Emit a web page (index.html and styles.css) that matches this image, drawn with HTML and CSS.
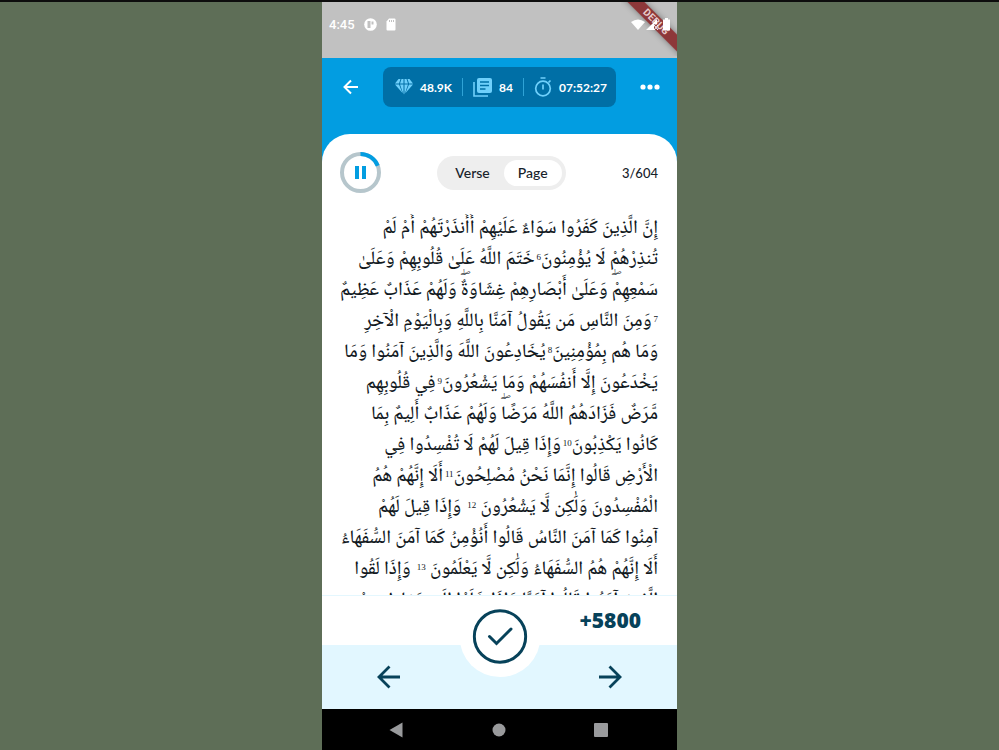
FILE: index.html
```html
<!DOCTYPE html>
<html lang="en">
<head>
<meta charset="utf-8">
<meta name="viewport" content="width=device-width, initial-scale=1">
<title>Quran reader</title>
<link rel="stylesheet" href="styles.css">
</head>
<body>
<div class="phone">
  <div class="status">
    <span class="clock">4:45</span>
    <svg class="status-icon" viewBox="0 0 13 13"><circle cx="6.500" cy="6.500" r="6.300" fill="#fff"/><path d="M3.500 3h3v7h-3zM7.500 3.500h2v3h-2z" fill="#c1c1c1"/></svg>
    <svg class="status-icon" viewBox="0 0 13 13"><path d="M5 .5h5.500q1 0 1 1v10q0 1-1 1h-7q-1 0-1-1V3.500z" fill="#fff"/><path d="M5.500 2v2M7.500 2v2M9.500 2v2" stroke="#c1c1c1"/></svg>
    <svg class="signals" viewBox="0 0 40 14"><path d="M0 4Q7-1 14 4L7 12zM15 12L26 1v5h-3v6zM34 1.500V0h3v1.500h2v11h-7v-11z" fill="#fff"/><path d="M23 7l4 5M27 7l-4 5" stroke="#fff"/></svg>
  </div>
  <div class="debug"><span>DEBUG</span></div>

  <header class="topbar">
    <button class="icon-btn" aria-label="Back"><svg width="16" height="16" viewBox="0 0 16 16" fill="none" stroke="#fff" stroke-width="2"><path d="M15 8H2M8 1.500L1.500 8L8 14.500"/></svg></button>
    <div class="stats">
      <span class="stat">
        <svg width="18" height="16" viewBox="0 0 18 16" fill="#6fd0fb"><path d="M3.500 0H5.500L4 4.500H0zM6.500 0h2v4.500H5zM9.500 0h2L13 4.500H9.500zM12.500 0h2L18 4.500h-4zM0 5.500h4L7.500 14zM5 5.500h3.500V15.500zM9.500 5.500H13L9.500 15.500zM14 5.500h4L10.500 14z"/></svg>
        48.9K</span>
      <span class="stat">
        <svg width="19" height="19" viewBox="0 0 19 19"><rect x="4" y="0" width="15" height="15" rx="2" fill="#6fd0fb"/><path d="M7 4h9M7 7.500h9M7 11h5.500" stroke="#006fa6" stroke-width="1.500"/><path d="M1 4v14h14" fill="none" stroke="#6fd0fb" stroke-width="1.600"/></svg>
        84</span>
      <span class="stat">
        <svg width="18" height="20" viewBox="0 0 18 20" fill="none" stroke="#6fd0fb" stroke-width="1.700"><circle cx="9" cy="11.500" r="7.300"/><path d="M6.500 1h5M9 7.500v5M14.500 5.500l2-2"/></svg>
        07:52:27</span>
    </div>
    <button class="icon-btn" aria-label="More"><svg width="20" height="6" viewBox="0 0 20 6" fill="#fff"><circle cx="3" cy="3" r="2.600"/><circle cx="10" cy="3" r="2.600"/><circle cx="17" cy="3" r="2.600"/></svg></button>
  </header>

  <main class="sheet">
    <div class="controls">
      <button class="icon-btn" aria-label="Pause"><svg width="41" height="41" viewBox="0 0 41 41" fill="none" stroke-width="4"><circle cx="20.500" cy="20.500" r="18.500" stroke="#b6c6cc"/><path d="M20.500 2A18.500 18.500 0 0 1 37.700 13.700" stroke="#029de1"/><path d="M17 14v13M24 14v13" stroke="#029de1"/></svg></button>
      <div class="toggle">
        <button class="tab">Verse</button>
        <button class="tab active">Page</button>
      </div>
      <span class="count">3/604</span>
    </div>
    <div class="page" lang="ar" dir="rtl">
      <p>إِنَّ الَّذِينَ كَفَرُوا سَوَاءٌ عَلَيْهِمْ أَأَنذَرْتَهُمْ أَمْ لَمْ</p>
      <p>تُنذِرْهُمْ لَا يُؤْمِنُونَ<sup>6</sup>خَتَمَ اللَّهُ عَلَىٰ قُلُوبِهِمْ وَعَلَىٰ</p>
      <p>سَمْعِهِمْۖ وَعَلَىٰ أَبْصَارِهِمْ غِشَاوَةٌۖ وَلَهُمْ عَذَابٌ عَظِيمٌ</p>
      <p><sup>7</sup>وَمِنَ النَّاسِ مَن يَقُولُ آمَنَّا بِاللَّهِ وَبِالْيَوْمِ الْآخِرِ</p>
      <p>وَمَا هُم بِمُؤْمِنِينَ<sup>8</sup>يُخَادِعُونَ اللَّهَ وَالَّذِينَ آمَنُوا وَمَا</p>
      <p>يَخْدَعُونَ إِلَّا أَنفُسَهُمْ وَمَا يَشْعُرُونَ<sup>9</sup>فِي قُلُوبِهِم</p>
      <p>مَّرَضٌ فَزَادَهُمُ اللَّهُ مَرَضًاۖ وَلَهُمْ عَذَابٌ أَلِيمٌ بِمَا</p>
      <p>كَانُوا يَكْذِبُونَ<sup>10</sup>وَإِذَا قِيلَ لَهُمْ لَا تُفْسِدُوا فِي</p>
      <p>الْأَرْضِ قَالُوا إِنَّمَا نَحْنُ مُصْلِحُونَ<sup>11</sup>أَلَا إِنَّهُمْ هُمُ</p>
      <p>الْمُفْسِدُونَ وَلَٰكِن لَّا يَشْعُرُونَ <sup>12</sup> وَإِذَا قِيلَ لَهُمْ</p>
      <p>آمِنُوا كَمَا آمَنَ النَّاسُ قَالُوا أَنُؤْمِنُ كَمَا آمَنَ السُّفَهَاءُ</p>
      <p>أَلَا إِنَّهُمْ هُمُ السُّفَهَاءُ وَلَٰكِن لَّا يَعْلَمُونَ <sup>13</sup> وَإِذَا لَقُوا</p>
      <p>الَّذِينَ آمَنُوا قَالُوا آمَنَّا وَإِذَا خَلَوْا إِلَىٰ شَيَاطِينِهِمْ</p>
    </div>
  </main>

  <footer class="bottom">
    <div class="score">+5800</div>
    <div class="pager">
      <button class="icon-btn" aria-label="Previous page"><svg width="24" height="24" viewBox="0 0 24 24" fill="none" stroke="#07425a" stroke-width="2.800"><path d="M23 12H2M12.500 1.500L2 12L12.500 22.500"/></svg></button>
      <button class="icon-btn" aria-label="Next page"><svg width="24" height="24" viewBox="0 0 24 24" fill="none" stroke="#07425a" stroke-width="2.800"><path d="M1 12H22M11.500 1.500L22 12L11.500 22.500"/></svg></button>
    </div>
    <button class="done" aria-label="Mark page as read"><svg width="55" height="55" viewBox="0 0 55 55" fill="none" stroke="#07425a" stroke-width="3"><circle cx="27.500" cy="27.500" r="25.700"/><path d="M17 27.500l7 7L38.500 20" stroke-linecap="round"/></svg></button>
  </footer>

  <nav class="system">
    <button class="icon-btn" aria-label="System back"><svg width="14" height="16" viewBox="0 0 14 16"><path d="M13.500 .5v15L.5 8z" fill="#999a9c"/></svg></button>
    <button class="icon-btn" aria-label="Home"><svg width="14" height="14" viewBox="0 0 14 14"><circle cx="7" cy="7" r="6.500" fill="#999a9c"/></svg></button>
    <button class="icon-btn" aria-label="Recent apps"><svg width="14" height="14" viewBox="0 0 14 14"><rect width="14" height="14" rx="1" fill="#999a9c"/></svg></button>
  </nav>
</div>
</body>
</html>
```

FILE: styles.css
```css
* { box-sizing: border-box; }

body {
  margin: 0;
  background: #5e6e57;
  border-top: 2px solid #0d0d0d;
  font-family: Lato, "Open Sans", sans-serif;
  color: #17222a;
}

button {
  margin: 0;
  padding: 0;
  border: 0;
  background: none;
  font: inherit;
  color: inherit;
}

svg { display: block; flex: none; }

.icon-btn {
  display: flex;
  align-items: center;
  justify-content: center;
}

.phone {
  position: relative;
  display: flex;
  flex-direction: column;
  width: 100%;
  max-width: 355px;
  height: calc(100vh - 2px);
  margin: 0 auto;
  overflow: hidden;
  background: #029de1;
}

.status {
  display: flex;
  align-items: flex-start;
  gap: 7px;
  padding: 16px 6px 27px 7px;
  background: #c1c1c1;
  color: #fff;
}

.clock {
  margin-right: 2px;
  font: 500 13px/13px Roboto, sans-serif;
}

.status-icon { width: 13px; height: 13px; }

.signals {
  position: relative;
  z-index: 1;
  width: 40px;
  height: 14px;
  margin: 0 0 -1px auto;
}

.debug {
  position: absolute;
  top: 0;
  right: 0;
  width: 56px;
  height: 54px;
  overflow: hidden;
}

.debug span {
  position: absolute;
  top: 14px;
  left: -11px;
  width: 92px;
  background: rgba(128, 20, 22, 0.8);
  box-shadow: 0 0 6px rgba(0, 0, 0, 0.4);
  color: #e8cccc;
  font: 700 10px/12px Roboto, sans-serif;
  text-align: center;
  transform: rotate(45deg);
}

.topbar {
  display: flex;
  align-items: flex-start;
  justify-content: space-between;
  padding: 9px 17px 27px 21px;
}

.topbar .icon-btn { height: 40px; }

.stats {
  display: flex;
  align-items: center;
  height: 40px;
  padding: 0 9px 0 12px;
  border-radius: 8px;
  background: #006fa6;
  color: #fff;
  font-size: 12px;
  font-weight: 700;
}

.stat {
  display: flex;
  align-items: center;
  gap: 7px;
}

.stat + .stat {
  height: 18px;
  margin-left: 10px;
  padding-left: 10px;
  border-left: 1px solid #2fa3d6;
}

.sheet {
  flex: 1;
  min-height: 0;
  display: flex;
  flex-direction: column;
  border-radius: 28px 28px 0 0;
  background: #fff;
}

.controls {
  display: flex;
  align-items: center;
  justify-content: space-between;
  padding: 18px 19px 0 18px;
  font-size: 14px;
  font-weight: 500;
}

.count { font-size: 13px; }

.toggle {
  display: flex;
  padding: 4px;
  border-radius: 17px;
  background: #eee;
}

.tab {
  height: 26px;
  padding: 0 14px;
  border-radius: 13px;
}

.tab.active { background: #fff; }

.page {
  flex: 1;
  min-height: 0;
  overflow: hidden;
  margin-top: 21px;
  padding: 0 19px;
  color: #11181d;
  font-family: "Noto Naskh Arabic", "Amiri", "Scheherazade New", "DejaVu Sans", serif;
  font-size: 19px;
  font-weight: 500;
  line-height: 31px;
}

.page p {
  height: 31px;
  margin: 0;
  white-space: nowrap;
}

.page sup {
  margin: 0 2px;
  font: 9px/1 "Liberation Serif", serif;
  vertical-align: 4px;
}

.page p > sup:first-child { margin-right: 0; }

.bottom {
  position: relative;
  border-top: 1px solid #e4f7fe;
  background: #fff;
}

.score {
  height: 49px;
  padding-right: 36px;
  color: #07425a;
  font-family: "Open Sans", Lato, sans-serif;
  font-size: 21px;
  font-weight: 800;
  line-height: 49px;
  text-align: right;
}

.pager {
  display: flex;
  justify-content: space-between;
  height: 64px;
  padding: 0 55px;
  background: #e2f7ff;
}

.done {
  position: absolute;
  top: 0;
  left: 50%;
  display: flex;
  align-items: center;
  justify-content: center;
  width: 81px;
  height: 81px;
  border-radius: 50%;
  background: #fff;
  transform: translateX(-50%);
}

.system {
  display: flex;
  align-items: center;
  justify-content: space-between;
  height: 41px;
  padding: 0 69px 0 67px;
  background: #000;
}
```
